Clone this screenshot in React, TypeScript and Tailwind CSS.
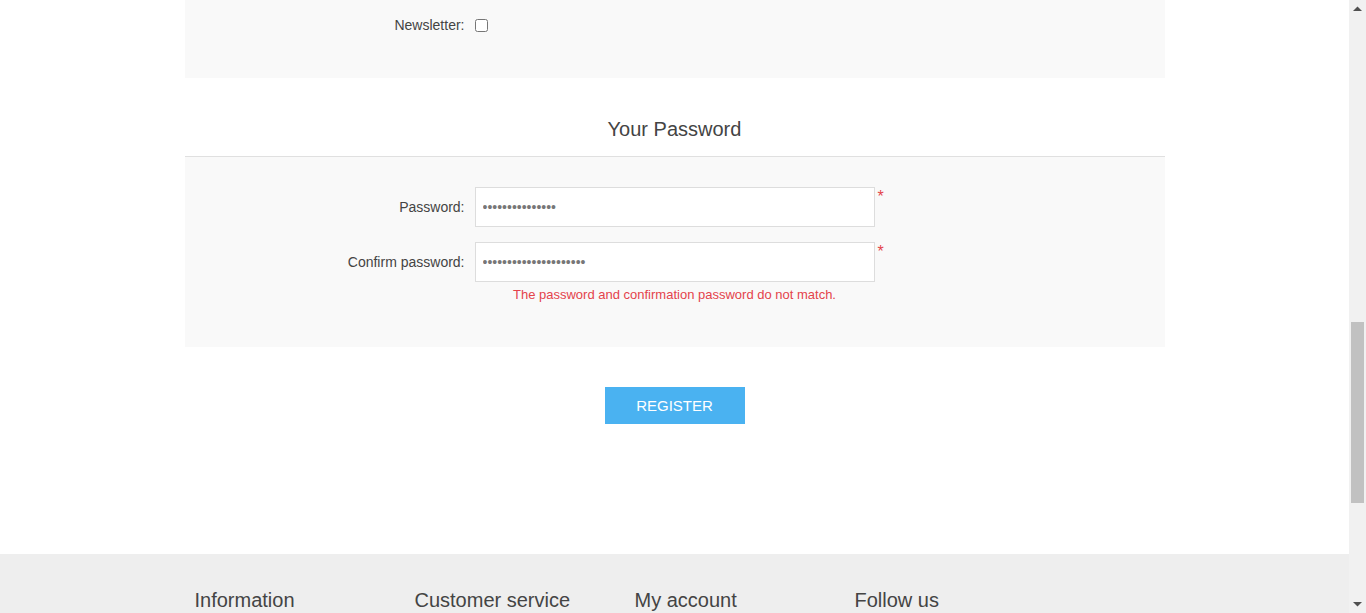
import React from "react";

const font = { fontFamily: '"Liberation Sans", Arial, sans-serif' };

function FieldRow({
  label,
  children,
  className = "",
}: {
  label: string;
  children: React.ReactNode;
  className?: string;
}) {
  return (
    <div className={`flex items-start ${className}`}>
      <label className="w-[280px] shrink-0 text-right text-[14px] text-[#444] mr-[10px] leading-[40px]">
        {label}
      </label>
      {children}
    </div>
  );
}

function PasswordInput({ value }: { value: string }) {
  return (
    <div className="flex items-start">
      <input
        type="password"
        defaultValue={value}
        readOnly
        className="w-[400px] h-[40px] bg-white border border-[#ddd] px-[7px] text-[14px] text-[#777] outline-none"
      />
      <span className="ml-[3px] mt-[2px] text-[16px] leading-[16px] text-[#e4434b]">*</span>
    </div>
  );
}

function Scrollbar() {
  return (
    <div className="w-[17px] h-full bg-[#f1f1f1] flex flex-col items-center">
      <svg width="17" height="17" viewBox="0 0 17 17" className="shrink-0">
        <path d="M4 11 L8.5 6.5 L13 11 Z" fill="#505050" />
      </svg>
      <div className="h-[305px] shrink-0" />
      <div className="w-[13px] h-[181px] bg-[#c1c1c1] shrink-0" />
      <div className="flex-1" />
      <svg width="17" height="17" viewBox="0 0 17 17" className="shrink-0">
        <path d="M4 6 L13 6 L8.5 10.5 Z" fill="#505050" />
      </svg>
    </div>
  );
}

export default function App() {
  return (
    <div className="flex h-[613px] w-[1366px] overflow-hidden bg-white" style={font}>
      <div className="flex-1 flex flex-col">
        <div className="w-[980px] mx-auto">
          <div className="bg-[#f9f9f9] h-[78px] pt-[5px]">
            <FieldRow label="Newsletter:">
              <input
                type="checkbox"
                className="mt-[14px] w-[13px] h-[13px]"
              />
            </FieldRow>
          </div>

          <div className="h-[79px] border-b border-[#e0e0e0] flex items-center justify-center pt-[23px]">
            <h2 className="text-[20px] text-[#444] font-normal">Your Password</h2>
          </div>

          <div className="bg-[#f9f9f9] h-[190px] pt-[30px]">
            <FieldRow label="Password:">
              <PasswordInput value="abcdefghijklmno" />
            </FieldRow>
            <FieldRow label="Confirm password:" className="mt-[15px]">
              <div className="flex flex-col">
                <PasswordInput value="abcdefghijklmnopqrstu" />
                <span className="w-[400px] text-center text-[13px] text-[#e4434b] mt-[3px]">
                  The password and confirmation password do not match.
                </span>
              </div>
            </FieldRow>
          </div>

          <div className="flex justify-center pt-[40px] h-[207px]">
            <button className="w-[140px] h-[37px] pt-[2px] bg-[#4ab2f1] text-white text-[15px] uppercase">
              Register
            </button>
          </div>
        </div>

        <footer className="flex-1 bg-[#eee]">
          <div className="w-[980px] mx-auto px-[10px] pt-[31px] grid grid-cols-[220px_220px_220px_220px]">
            <h3 className="text-[20px] text-[#444] font-normal">Information</h3>
            <h3 className="text-[20px] text-[#444] font-normal">Customer service</h3>
            <h3 className="text-[20px] text-[#444] font-normal">My account</h3>
            <h3 className="text-[20px] text-[#444] font-normal">Follow us</h3>
          </div>
        </footer>
      </div>
      <Scrollbar />
    </div>
  );
}
